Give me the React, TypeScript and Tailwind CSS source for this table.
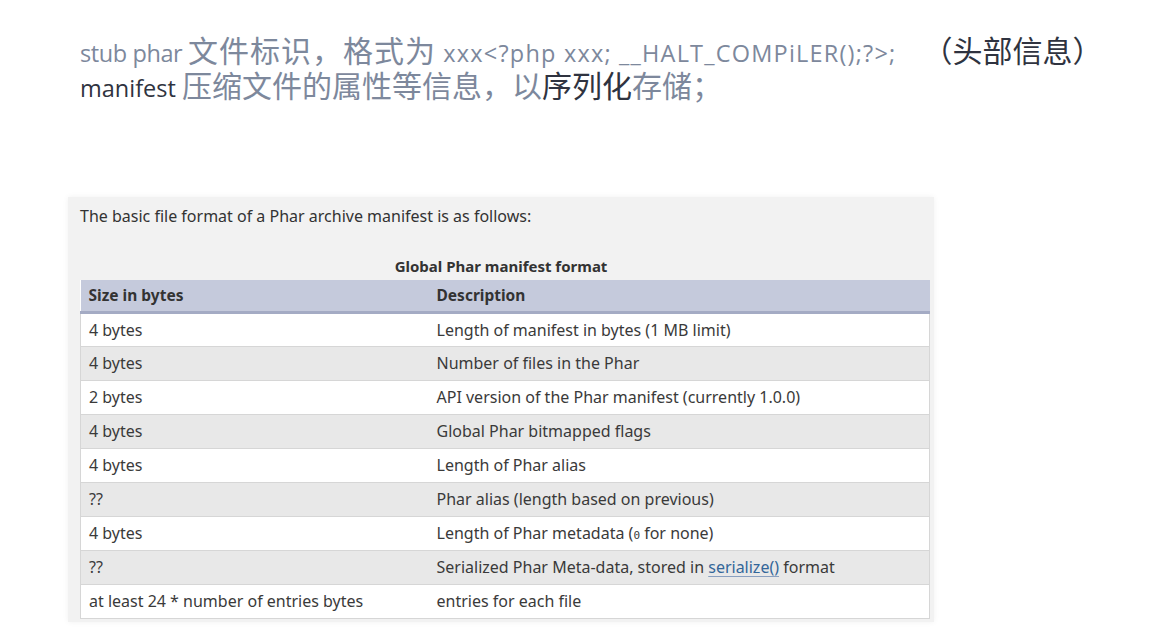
const rows: [string, React.ReactNode][] = [
  ['4 bytes', 'Length of manifest in bytes (1 MB limit)'],
  ['4 bytes', 'Number of files in the Phar'],
  ['2 bytes', 'API version of the Phar manifest (currently 1.0.0)'],
  ['4 bytes', 'Global Phar bitmapped flags'],
  ['4 bytes', 'Length of Phar alias'],
  ['??', 'Phar alias (length based on previous)'],
  [
    '4 bytes',
    <>
      Length of Phar metadata (<code className="font-['DejaVu_Sans_Mono',monospace] text-[11px]">0</code> for none)
    </>,
  ],
  [
    '??',
    <>
      Serialized Phar Meta-data, stored in{' '}
      <span className="text-[#336699] underline decoration-[#8aa0c0] underline-offset-[3px]">serialize()</span> format
    </>,
  ],
  ['at least 24 * number of entries bytes', 'entries for each file'],
];

// latin and CJK runs are sized separately, as on the slide
const latin = "text-[23.5px] leading-[35px] font-['Open_Sans',sans-serif]";
const cjk = "text-[30px] leading-[35px] font-['Noto_Sans_CJK_SC',sans-serif]";

const light = 'text-[#7d889c]';
const dark = 'text-[#2f3340]';

const App = () => {
  return (
    <div className="w-full h-[641px] bg-white overflow-hidden">
      <div className="pl-[80px] pt-[32px]">
        <div className="h-[35px] flex items-baseline whitespace-pre">
          <span className={`${latin} ${light} tracking-[-0.4px]`}>stub phar </span>
          <span className={`${cjk} ${light} tracking-[1px]`}>文件标识，格式为</span>
          <span className={`${latin} ${light} tracking-[1.2px]`}> xxx&lt;?php xxx; __HALT_COMPiLER();?&gt;;</span>
          <span className={`${cjk} ${dark} ml-[26px]`}>（头部信息）</span>
        </div>
        <div className="h-[35px] flex items-baseline whitespace-pre">
          <span className={`${latin} ${dark}`}>manifest </span>
          <span className={`${cjk} ${light}`}>压缩文件的属性等信息，以</span>
          <span className={`${cjk} ${dark}`}>序列化</span>
          <span className={`${cjk} ${light}`}>存储；</span>
        </div>
      </div>

      <div className="ml-[68px] mt-[95px] w-[866px] bg-[#f2f2f2] px-[12px] pt-[8px] pb-[3px] shadow-[0_0_6px_rgba(0,0,0,0.06)] font-['Noto_Sans',sans-serif] text-[#333]">
        <p className="text-[16px] leading-[22px]">The basic file format of a Phar archive manifest is as follows:</p>
        <p className="mt-[28px] mb-[3px] text-center text-[15px] leading-[22px] font-bold text-[#333]">Global Phar manifest format</p>
        <table className="w-[850px] border-collapse text-[16px] bg-white">
          <thead>
            <tr className="bg-[#c5cadc] border-b-[3px] border-[#a4abc4]">
              <th className="w-[348px] h-[32px] pl-[8px] text-left font-bold text-[15.5px]">Size in bytes</th>
              <th className="h-[32px] pl-[8px] text-left font-bold text-[15.5px]">Description</th>
            </tr>
          </thead>
          <tbody>
            {rows.map(([size, desc], i) => (
              <tr
                key={i}
                className={`border border-[#d6d6d6] ${i % 2 === 1 ? 'bg-[#e8e8e8]' : 'bg-white'}`}
              >
                <td className="h-[34px] pl-[8px] text-[#3a3a3a]">{size}</td>
                <td className="h-[34px] pl-[8px] text-[#3a3a3a]">{desc}</td>
              </tr>
            ))}
          </tbody>
        </table>
      </div>
    </div>
  );
};

export default App;
